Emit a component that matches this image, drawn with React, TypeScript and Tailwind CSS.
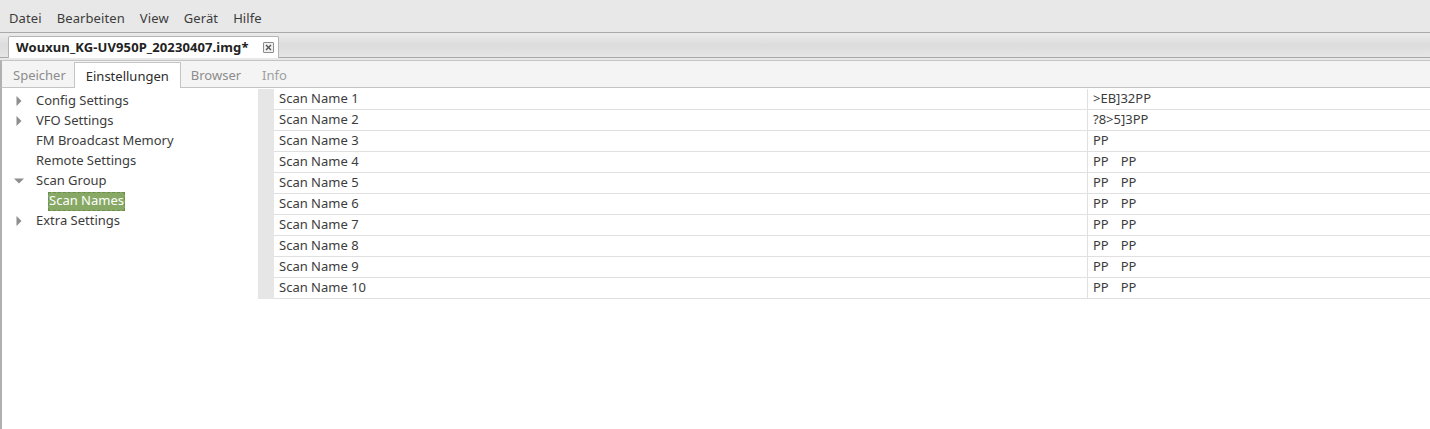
import React from "react";

const tree = [
  { label: "Config Settings", arrow: "right", indent: 0 },
  { label: "VFO Settings", arrow: "right", indent: 0 },
  { label: "FM Broadcast Memory", arrow: null, indent: 0 },
  { label: "Remote Settings", arrow: null, indent: 0 },
  { label: "Scan Group", arrow: "down", indent: 0 },
  { label: "Scan Names", arrow: null, indent: 1, selected: true },
  { label: "Extra Settings", arrow: "right", indent: 0 },
];

const rows = [
  [">EB]32PP"],
  ["?8>5]3PP"],
  ["PP"],
  ["PP", "PP"],
  ["PP", "PP"],
  ["PP", "PP"],
  ["PP", "PP"],
  ["PP", "PP"],
  ["PP", "PP"],
  ["PP", "PP"],
];

function Arrow({ dir }: { dir: string | null }) {
  if (!dir) return <span className="w-[8px]" />;
  if (dir === "right")
    return (
      <svg width="8" height="12" viewBox="0 0 8 12">
        <path d="M1.5 1 L6.5 6 L1.5 11 Z" fill="#8e8e8e" />
      </svg>
    );
  return (
    <svg width="12" height="8" viewBox="0 0 12 8">
      <path d="M1 1.5 L11 1.5 L6 6.5 Z" fill="#8e8e8e" />
    </svg>
  );
}

export default function App() {
  return (
    <div className="w-[1430px] h-[429px] bg-white flex flex-col font-['Noto_Sans',sans-serif] text-[13px] text-[#3c3c3c] overflow-hidden">
      {/* menubar */}
      <div className="h-[33px] shrink-0 bg-[#e8e8e8] border-b border-[#a9a9a9] flex items-center pl-[9px] gap-[15px] pt-[6px] tracking-[0.1px]">
        <span>Datei</span>
        <span>Bearbeiten</span>
        <span>View</span>
        <span>Gerät</span>
        <span>Hilfe</span>
      </div>
      {/* outer notebook tabs */}
      <div className="h-[25px] shrink-0 bg-gradient-to-b from-[#ebebeb] via-[#dcdcdc] to-[#e6e6e6] border-b border-[#a9a9a9] flex items-end pl-[8px]">
        <div className="h-[22px] w-[271px] bg-white border border-b-0 border-[#b4b4b4] rounded-t-[2px] flex items-center pl-[7px] pr-[4px] -mb-px">
          <span className="font-bold text-[#222] tracking-[0.1px]">Wouxun_KG-UV950P_20230407.img*</span>
          <span className="ml-auto mr-[0px] w-[11px] h-[11px] border border-[#8c8c8c] rounded-[1px] flex items-center justify-center bg-[#f0f0f0]">
            <svg width="7" height="7" viewBox="0 0 7 7">
              <path d="M1 1 L6 6 M6 1 L1 6" stroke="#555" strokeWidth="1.4" />
            </svg>
          </span>
        </div>
      </div>
      <div className="h-[2px] shrink-0 bg-[#e8e8e8]" />
      {/* inner tabs */}
      <div className="h-[28px] shrink-0 bg-[#f4f4f4] border-t border-b border-[#c4c4c4] flex items-end border-l-2 border-l-[#b0b0b0]">
        <div className="h-[25px] flex items-center pl-[11px] pr-[8px] pt-[3px] text-[#8c8c8c]">Speicher</div>
        <div className="h-[26px] w-[107px] -mb-px bg-white border border-b-0 border-[#c4c4c4] flex items-center justify-center pt-[2px] text-[#2c2c2c]">
          Einstellungen
        </div>
        <div className="h-[25px] flex items-center pl-[10px] pr-[10px] pt-[3px] text-[#8c8c8c]">Browser</div>
        <div className="h-[25px] flex items-center pl-[11px] pt-[3px] text-[#a0a0a0]">Info</div>
      </div>
      {/* main */}
      <div className="flex-1 flex border-l-2 border-[#b0b0b0]">
        <div className="w-[256px] shrink-0 pt-[3px]">
          {tree.map((t) => (
            <div key={t.label} className="h-[20px] flex items-center">
              <span className="w-[34px] pl-[10px] pr-[10px] flex items-center justify-center">
                <Arrow dir={t.arrow} />
              </span>
              {t.selected ? (
                <span className="ml-[12px] h-[19px] px-[1px] bg-[#87a965] text-white flex items-center outline outline-1 outline-dashed outline-[#6c8e4c] -outline-offset-1">
                  {t.label}
                </span>
              ) : (
                <span>{t.label}</span>
              )}
            </div>
          ))}
        </div>
        <div className="flex-1 flex flex-col pt-[1px]">
          <div className="flex flex-col">
            {rows.map((r, i) => (
              <div key={i} className="h-[21px] flex">
                <div className="w-[16px] shrink-0 bg-[#e6e6e6]" />
                <div className="w-[813px] shrink-0 border-b border-[#e0e0e0] flex items-center pl-[5px]">
                  Scan Name {i + 1}
                </div>
                <div className="flex-1 border-b border-l border-[#e0e0e0] flex items-center pl-[5px] gap-[12px]">
                  {r.map((v, j) => (
                    <span key={j}>{v}</span>
                  ))}
                </div>
              </div>
            ))}
          </div>
        </div>
      </div>
    </div>
  );
}
